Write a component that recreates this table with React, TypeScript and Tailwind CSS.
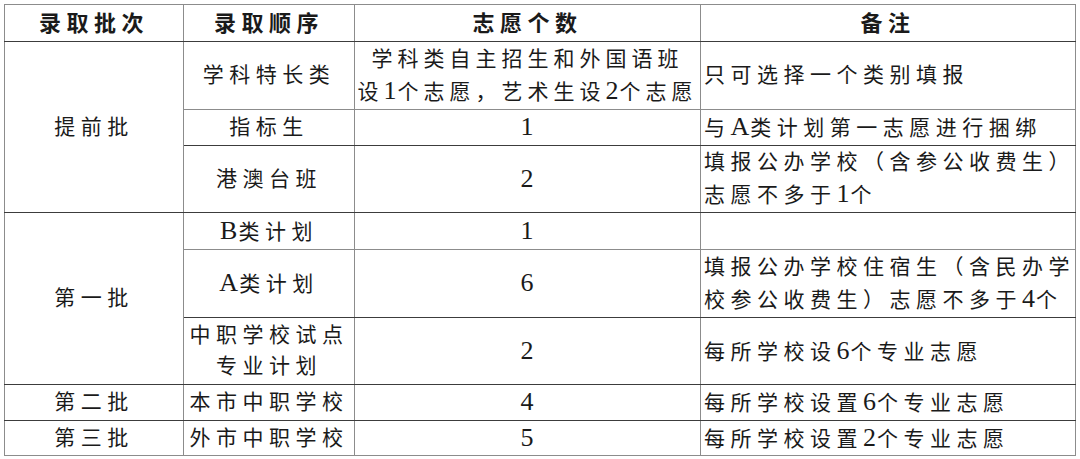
import React from "react";

const FONT = {
  fontFamily: '"Liberation Serif", "Noto Sans CJK SC", serif',
};

const cell =
  "border border-[#8c8c8c] border-y-[#3c3c3c] text-center align-middle p-0 whitespace-nowrap";
const note = "border border-[#8c8c8c] border-y-[#3c3c3c] text-left align-middle pl-[3px] p-0 whitespace-nowrap";

// latin letters and digits are set larger and tighter than the CJK text
function D({ children }: { children: React.ReactNode }) {
  return <span className="text-[26px] tracking-[1px]">{children}</span>;
}

export default function App() {
  return (
    <div className="w-[1080px] h-[459px] bg-white pl-[4px] pt-[4px]" style={FONT}>
      <table className="table-fixed border-collapse text-[#1a1a1a] text-[21px] leading-[31px] tracking-[5.5px]">
        <colgroup>
          <col className="w-[179px]" />
          <col className="w-[171px]" />
          <col className="w-[346px]" />
          <col className="w-[374px]" />
        </colgroup>
        <thead>
          <tr className="h-[37px]">
            <th className={`${cell} border-t-[#8c8c8c] font-bold text-[22px]`}>录取批次</th>
            <th className={`${cell} border-t-[#8c8c8c] font-bold text-[22px]`}>录取顺序</th>
            <th className={`${cell} border-t-[#8c8c8c] font-bold text-[22px]`}>志愿个数</th>
            <th className={`${cell} border-t-[#8c8c8c] font-bold text-[22px]`}>备注</th>
          </tr>
        </thead>
        <tbody>
          <tr className="h-[68px]">
            <td rowSpan={3} className={cell}>提前批</td>
            <td className={`${cell} border-b-[#8c8c8c]`}>学科特长类</td>
            <td className={`${cell} border-b-[#8c8c8c] tracking-[5px]`}>
              学科类自主招生和外国语班
              <br />
              设<D>1</D>个志愿，艺术生设<D>2</D>个志愿
            </td>
            <td className={`${note} border-b-[#8c8c8c]`}>只可选择一个类别填报</td>
          </tr>
          <tr className="h-[36px]">
            <td className={cell}>指标生</td>
            <td className={cell}><D>1</D></td>
            <td className={note}>与<D>A</D>类计划第一志愿进行捆绑</td>
          </tr>
          <tr className="h-[67px]">
            <td className={cell}>港澳台班</td>
            <td className={cell}><D>2</D></td>
            <td className={note}>
              填报公办学校（含参公收费生）
              <br />
              志愿不多于<D>1</D>个
            </td>
          </tr>
          <tr className="h-[37px]">
            <td rowSpan={3} className={cell}>第一批</td>
            <td className={`${cell} border-b-[#8c8c8c]`}><D>B</D>类计划</td>
            <td className={`${cell} border-b-[#8c8c8c]`}><D>1</D></td>
            <td className={`${note} border-b-[#8c8c8c]`}></td>
          </tr>
          <tr className="h-[68px]">
            <td className={cell}><D>A</D>类计划</td>
            <td className={cell}><D>6</D></td>
            <td className={note}>
              填报公办学校住宿生（含民办学
              <br />
              校参公收费生）志愿不多于<D>4</D>个
            </td>
          </tr>
          <tr className="h-[67px]">
            <td className={cell}>
              中职学校试点
              <br />
              专业计划
            </td>
            <td className={cell}><D>2</D></td>
            <td className={note}>每所学校设<D>6</D>个专业志愿</td>
          </tr>
          <tr className="h-[36px]">
            <td className={cell}>第二批</td>
            <td className={cell}>本市中职学校</td>
            <td className={cell}><D>4</D></td>
            <td className={note}>每所学校设置<D>6</D>个专业志愿</td>
          </tr>
          <tr className="h-[35px]">
            <td className={`${cell} border-b-[#8c8c8c]`}>第三批</td>
            <td className={`${cell} border-b-[#8c8c8c]`}>外市中职学校</td>
            <td className={`${cell} border-b-[#8c8c8c]`}><D>5</D></td>
            <td className={`${note} border-b-[#8c8c8c]`}>每所学校设置<D>2</D>个专业志愿</td>
          </tr>
        </tbody>
      </table>
    </div>
  );
}
